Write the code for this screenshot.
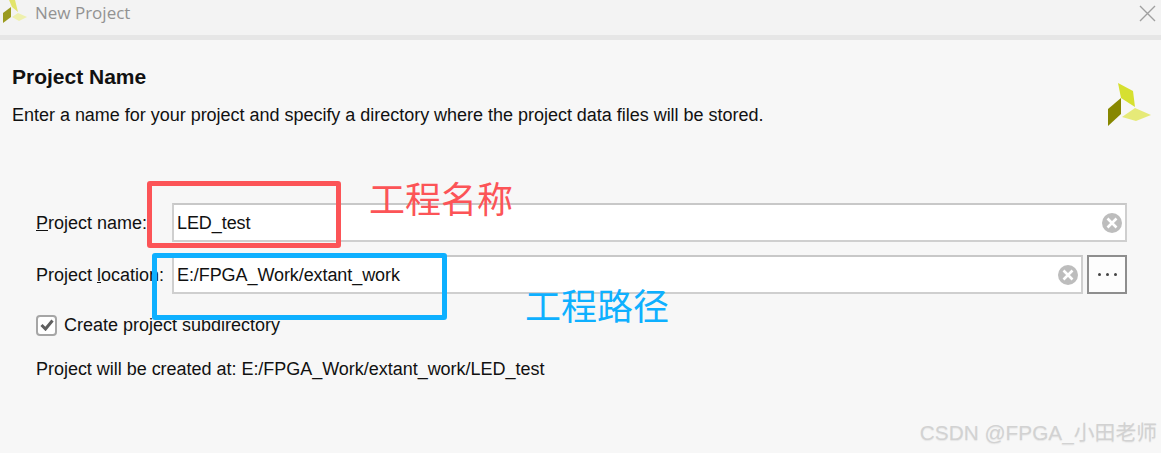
<div class="dialog">
  <header class="titlebar">
    <svg class="title-logo" width="28" height="24" viewBox="0 0 28 24">
      <polygon points="9,0 15,0 18,12 12,7" fill="#e2e46c"/>
      <polygon points="3,13 11,7 11,17 3,23" fill="#9a9a1e"/>
      <polygon points="12,17 18,13 27,17 19,21" fill="#eef0ad"/>
    </svg>
    <span class="title">New Project</span>
    <svg class="close" width="18" height="18" viewBox="0 0 18 18">
      <path d="M2 2 L17 17 M17 2 L2 17" stroke="#a0a0a0" stroke-width="1.4" fill="none"/>
    </svg>
  </header>

  <main class="body">
    <div class="intro">
      <div class="intro-text">
        <h1>Project Name</h1>
        <p>Enter a name for your project and specify a directory where the project data files will be stored.</p>
      </div>
      <svg class="big-logo" width="44" height="44" viewBox="0 0 44 44">
        <polygon points="10,0 25,8 27,24 13,15" fill="#d6e030"/>
        <polygon points="0,26 13,15 13,31 0,43" fill="#878700"/>
        <polygon points="14,34 27,25 43,32 28,38" fill="#e6ea78"/>
      </svg>
    </div>

    <form class="form">
      <div class="row">
        <span class="label"><u>P</u>roject name:</span>
        <div class="field">
          <span class="value">LED_test</span>
          <svg class="clear" width="20" height="20" viewBox="0 0 20 20">
            <circle cx="10" cy="10" r="10" fill="#bdbdbd"/>
            <path d="M5.5 5.5 L14.5 14.5 M14.5 5.5 L5.5 14.5" stroke="#fff" stroke-width="2.6"/>
          </svg>
        </div>
      </div>
      <div class="row row-location">
        <span class="label">Project <u>l</u>ocation:</span>
        <div class="field">
          <span class="value">E:/FPGA_Work/extant_work</span>
          <svg class="clear" width="20" height="20" viewBox="0 0 20 20">
            <circle cx="10" cy="10" r="10" fill="#bdbdbd"/>
            <path d="M5.5 5.5 L14.5 14.5 M14.5 5.5 L5.5 14.5" stroke="#fff" stroke-width="2.6"/>
          </svg>
        </div>
        <div class="browse"><i></i><i></i><i></i></div>
      </div>
      <div class="check-row">
        <span class="checkbox">
          <svg width="14" height="12" viewBox="0 0 14 12">
            <path d="M1.5 6 L5.5 10 L12.5 1.5" stroke="#5f5f5f" stroke-width="3" fill="none"/>
          </svg>
        </span>
        <span class="text">Create project subdirectory</span>
      </div>
      <div class="created text">Project will be created at: E:/FPGA_Work/extant_work/LED_test</div>
    </form>
  </main>

  <div class="annot box-red"></div>
  <div class="annot box-blue"></div>
  <div class="annot note note-red">工程名称</div>
  <div class="annot note note-blue">工程路径</div>
  <div class="annot watermark">CSDN @FPGA_小田老师</div>
</div>

<style>
  :global(body) {
    margin: 0;
    background: #f7f7f7;
  }
  .dialog {
    position: relative;
    width: 1161px;
    height: 453px;
    overflow: hidden;
    background: #f7f7f7;
    font-family: "Liberation Sans", Arial, sans-serif;
    font-size: 18px;
    color: #111;
  }
  .titlebar {
    display: flex;
    align-items: center;
    height: 35px;
    padding-left: 0;
    padding-right: 5px;
    background: #f3f3f3;
    border-bottom: 5px solid #e6e6e6;
  }
  .title-logo {
    margin-top: -11px;
    flex: none;
  }
  .title {
    margin-left: 7px;
    margin-top: -10px;
    font-family: "Open Sans", sans-serif;
    font-size: 17px;
    color: #929292;
  }
  .close {
    margin-left: auto;
    margin-top: -10px;
  }
  .body {
    display: flex;
    flex-direction: column;
  }
  .intro {
    display: flex;
    justify-content: space-between;
    padding: 26px 9px 0 12px;
    height: 117px;
    box-sizing: border-box;
  }
  h1 {
    margin: 0;
    font-size: 21px;
    line-height: 22px;
    font-weight: 700;
  }
  p {
    margin: 17px 0 0;
    font-size: 18px;
    line-height: 20px;
    letter-spacing: -0.02px;
  }
  .big-logo {
    margin-top: 17px;
  }
  .form {
    padding: 46px 34px 0 36px;
    display: flex;
    flex-direction: column;
  }
  .row {
    display: flex;
    align-items: center;
    height: 39px;
  }
  .row-location {
    margin-top: 13px;
  }
  .label {
    width: 136px;
    flex: none;
    white-space: nowrap;
    padding-top: 2px;
  }
  .value {
    padding-top: 2px;
    letter-spacing: -0.08px;
  }
  .field {
    flex: 1;
    display: flex;
    align-items: center;
    justify-content: space-between;
    height: 39px;
    box-sizing: border-box;
    padding: 0 3px;
    background: #fff;
    border: 2px solid #cfcfcf;
    border-top-color: #c8c8c8;
  }
  .browse {
    flex: none;
    width: 40px;
    height: 39px;
    margin-left: 4px;
    box-sizing: border-box;
    border: 2px solid #8e8e8e;
    background: #fdfdfd;
    display: flex;
    align-items: center;
    justify-content: center;
    gap: 5px;
  }
  .browse i {
    width: 3px;
    height: 3px;
    border-radius: 50%;
    background: #444;
  }
  .check-row {
    display: flex;
    align-items: center;
    margin-top: 19px;
    height: 24px;
  }
  .checkbox {
    display: flex;
    align-items: center;
    justify-content: center;
    width: 21px;
    height: 21px;
    margin-right: 7px;
    box-sizing: border-box;
    border: 2px solid #a6a6a6;
    border-radius: 4px;
    background: #fff;
  }
  .created {
    margin-top: 22px;
    line-height: 20px;
    letter-spacing: -0.025px;
  }
  .annot {
    position: absolute;
  }
  .box-red {
    left: 147px;
    top: 181px;
    width: 194px;
    height: 67px;
    box-sizing: border-box;
    border: 5px solid #fc5457;
    border-radius: 3px;
  }
  .box-blue {
    left: 152px;
    top: 253px;
    width: 295px;
    height: 67px;
    box-sizing: border-box;
    border: 5px solid #0eb0ff;
    border-radius: 3px;
  }
  .note {
    font-family: "Noto Sans CJK SC", sans-serif;
    font-size: 36px;
    line-height: 40px;
  }
  .note-red {
    left: 369px;
    top: 177px;
    color: #fc5457;
  }
  .note-blue {
    left: 525px;
    top: 284px;
    color: #0eb0ff;
  }
  .watermark {
    right: 4px;
    top: 420px;
    font-family: "Liberation Sans", "Noto Sans CJK SC", sans-serif;
    font-size: 20.8px;
    line-height: 26px;
    color: #d2d2d2;
    text-shadow: 0 1px 1px #e6e6e6;
    white-space: nowrap;
  }
</style>
